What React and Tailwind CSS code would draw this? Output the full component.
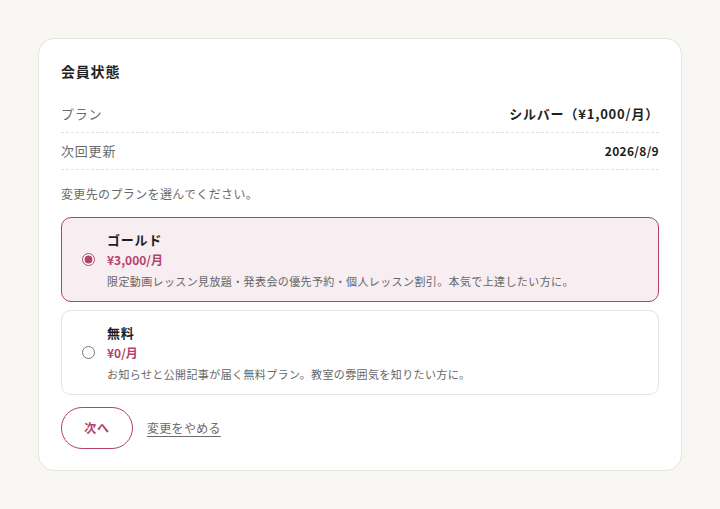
import React, { useState } from "react";

const plans = [
  {
    id: "gold",
    name: "ゴールド",
    price: "¥3,000/月",
    desc: "限定動画レッスン見放題・発表会の優先予約・個人レッスン割引。本気で上達したい方に。",
  },
  {
    id: "free",
    name: "無料",
    price: "¥0/月",
    desc: "お知らせと公開記事が届く無料プラン。教室の雰囲気を知りたい方に。",
  },
];

export default function App() {
  const [selected, setSelected] = useState("gold");

  return (
    <div
      className="min-h-[509px] w-full bg-[#f8f7f4] px-[38px] pt-[38px] pb-[38px] text-[#1f1f1f]"
      style={{ fontFamily: '"Noto Sans CJK JP", "Noto Sans", sans-serif' }}
    >
      <div className="rounded-[16px] border border-[#e6e4df] bg-white px-[22px] pt-[22px] pb-[21px] tracking-wider">
        <h2 className="text-[14px] font-bold leading-[20px]">会員状態</h2>

        <dl className="mt-[15px]">
          <div className="flex h-[37px] items-center justify-between border-b border-dashed border-[#e2e2e2]">
            <dt className="text-[13px] text-[#6b6b6b]">プラン</dt>
            <dd className="text-[13px] font-bold">シルバー（¥1,000/月）</dd>
          </div>
          <div className="flex h-[37px] items-center justify-between border-b border-dashed border-[#e2e2e2]">
            <dt className="text-[13px] text-[#6b6b6b]">次回更新</dt>
            <dd className="text-[12px] font-bold tracking-wide">2026/8/9</dd>
          </div>
        </dl>

        <p className="mt-[15px] text-[12px] leading-[18px] tracking-[0.03em] text-[#6b6b6b]">
          変更先のプランを選んでください。
        </p>

        <div className="mt-[14px] flex flex-col gap-2">
          {plans.map((p) => {
            const on = selected === p.id;
            return (
              <label
                key={p.id}
                className={
                  "flex h-[85px] cursor-pointer items-center rounded-[10px] border pl-[20px] " +
                  (on ? "border-[#b4426e] bg-[#f8edf1]" : "border-[#e4e4e4] bg-white")
                }
              >
                <input
                  type="radio"
                  name="plan"
                  checked={on}
                  onChange={() => setSelected(p.id)}
                  className="m-0 h-[13px] w-[13px] accent-[#b4426e]"
                />
                <div className="ml-[12px] flex flex-col">
                  <span className="text-[13px] font-bold leading-[18px]">{p.name}</span>
                  <span className="mt-[2px] text-[12px] font-bold leading-[18px] tracking-normal text-[#b4426e]">
                    {p.price}
                  </span>
                  <span className="mt-[4px] text-[11px] leading-[16px] tracking-[0.035em] text-[#666666]">
                    {p.desc}
                  </span>
                </div>
              </label>
            );
          })}
        </div>

        <div className="mt-[12px] flex items-center gap-[14px]">
          <button className="h-[42px] w-[72px] rounded-full border border-[#b4426e] bg-white text-[12px] font-bold text-[#b4426e]">
            次へ
          </button>
          <a className="text-[12px] tracking-wide text-[#6b6b6b] underline underline-offset-[3px]" href="#">
            変更をやめる
          </a>
        </div>
      </div>
    </div>
  );
}
